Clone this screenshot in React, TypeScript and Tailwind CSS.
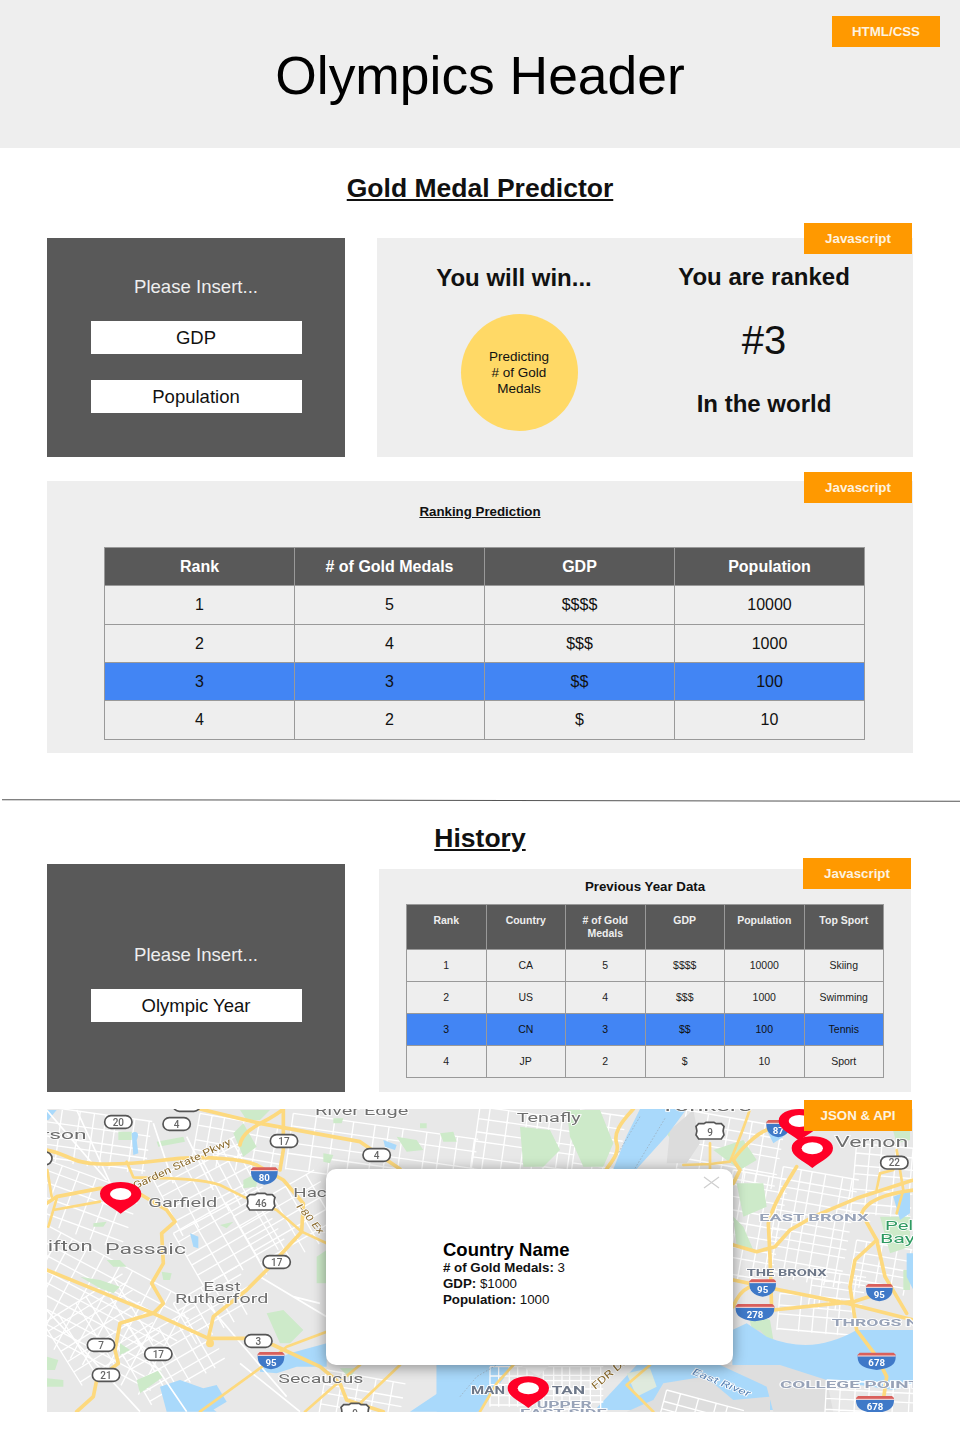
import React from "react";

const FONT = { fontFamily: '"Liberation Sans", Arial, sans-serif' };

function Badge({ label, className }: { label: string; className: string }) {
  return (
    <div className={"absolute flex h-[31px] w-[108px] items-center justify-center bg-[#ff9900] pt-[1px] text-[13.3px] font-bold text-[#fdf3e0] " + className}>
      {label}
    </div>
  );
}

function InsertField({ label }: { label: string }) {
  return <div className="flex h-[33px] w-[211px] items-center justify-center bg-white text-[18.5px] text-[#111]">{label}</div>;
}

const bigRows = [
  { h: "h-[39px]", c: ["1", "5", "$$$$", "10000"] },
  { h: "h-[38px]", c: ["2", "4", "$$$", "1000"] },
  { h: "h-[38px] bg-[#4285f4]", c: ["3", "3", "$$", "100"] },
  { h: "h-[39px]", c: ["4", "2", "$", "10"] },
];

const smallRows = [
  ["1", "CA", "5", "$$$$", "10000", "Skiing"],
  ["2", "US", "4", "$$$", "1000", "Swimming"],
  ["3", "CN", "3", "$$", "100", "Tennis"],
  ["4", "JP", "2", "$", "10", "Sport"],
];

function jitter(i: number) {
  const v = Math.sin(i * 12.9898 + 4.1) * 43758.5453;
  return 0.65 + 0.7 * (v - Math.floor(v));
}

function grid(x: number, y: number, w: number, h: number, angle: number, sx: number, sy: number) {
  let d = "";
  let n = Math.round(x + y);
  for (let i = 0; i <= w; i += sx * jitter(n++)) d += `M${Math.round(i)} 0V${h}`;
  for (let j = 0; j <= h; j += sy * jitter(n++)) d += `M0 ${Math.round(j)}H${w}`;
  return <path d={d} transform={`translate(${x} ${y}) rotate(${angle})`} fill="none" stroke="#fff" strokeWidth="4" />;
}

function L({ x, y, w, s = 40, c = "#6f6f6f", t, b, i, r }: { x: number; y: number; w: number; s?: number; c?: string; t: string; b?: boolean; i?: boolean; r?: number }) {
  return (
    <text
      x={x}
      y={y}
      fontSize={s}
      fill={c}
      textLength={w}
      lengthAdjust="spacingAndGlyphs"
      fontWeight={b ? 700 : 400}
      fontStyle={i ? "italic" : "normal"}
      fontFamily="Roboto, sans-serif"
      stroke="#fff"
      strokeWidth="4"
      paintOrder="stroke"
      transform={r ? `rotate(${r} ${x} ${y})` : undefined}
    >
      {t}
    </text>
  );
}

function Pill({ x, y, t }: { x: number; y: number; t: string }) {
  return (
    <g>
      <rect x={x - 41} y={y - 19} width="82" height="38" rx="19" fill="#fff" stroke="#555" strokeWidth="5" />
      <text x={x} y={y + 11} fontSize="30" fill="#666" fontWeight="500" textAnchor="middle" fontFamily="Roboto, sans-serif">{t}</text>
    </g>
  );
}

function UsShield({ x, y, t }: { x: number; y: number; t: string }) {
  return (
    <g>
      <path d={`M${x - 42} ${y - 16}l8-8h16l6-4h24l6 4h16l8 8c-4 10-4 16 0 26l-8 12h-68l-8-12c4-10 4-16 0-26z`} fill="#fff" stroke="#555" strokeWidth="5" />
      <text x={x} y={y + 12} fontSize="30" fill="#666" fontWeight="500" textAnchor="middle" fontFamily="Roboto, sans-serif">{t}</text>
    </g>
  );
}

function Interstate({ x, y, t, w = 40 }: { x: number; y: number; t: string; w?: number }) {
  return (
    <g>
      <path d={`M${x - w} ${y - 22}h${2 * w}c1 24-8 38-${w} 44c-${w - 8}-6-${w + 1}-20-${w}-44z`} fill="#3f79c8" />
      <path d={`M${x - w} ${y - 24}l6-6h${2 * w - 12}l6 6v5h-${2 * w}z`} fill="#d9605c" />
      <path d={`M${x - w} ${y - 20}h${2 * w}`} stroke="#fff" strokeWidth="2.5" />
      <text x={x} y={y + 11} fontSize="29" fill="#fff" fontWeight="700" textAnchor="middle" fontFamily="Roboto, sans-serif">{t}</text>
    </g>
  );
}

function Pin({ x, y }: { x: number; y: number }) {
  return (
    <g>
      <path d={`M${x} ${y + 57}C${x - 32} ${y + 32} ${x - 62} ${y + 22} ${x - 62} ${y - 3}C${x - 62} ${y - 25} ${x - 32} ${y - 38} ${x} ${y - 38}C${x + 32} ${y - 38} ${x + 62} ${y - 25} ${x + 62} ${y - 3}C${x + 62} ${y + 22} ${x + 32} ${y + 32} ${x} ${y + 57}z`} fill="#ff0027" />
      <ellipse cx={x} cy={y - 2} rx="32" ry="18" fill="#fff" />
    </g>
  );
}

function MapDrawing() {
  const y1 = { fill: "none", stroke: "#fdd97e", strokeWidth: 11, strokeLinejoin: "round" as const, strokeLinecap: "round" as const };
  const y2 = { ...y1, strokeWidth: 8 };
  const w = { fill: "none", stroke: "#fff", strokeWidth: 5 };
  return (
    <svg viewBox="47 1109 866 303" className="block h-[303px] w-[866px] blur-[0.5px]">
      <rect x="47" y="1109" width="866" height="303" fill="#e8e8e8" />
      <g transform="translate(0 1090) scale(0.33333)">
        {grid(140, 50, 320, 160, 8, 45, 34)}
        {grid(140, 210, 300, 180, 20, 50, 38)}
        {grid(130, 400, 520, 320, 28, 52, 38)}
        {grid(460, 270, 280, 190, -28, 46, 36)}
        {grid(520, 430, 280, 200, -30, 60, 42)}
        {grid(700, 380, 280, 200, -30, 64, 46)}
        {grid(600, 70, 270, 150, 10, 50, 38)}
        {grid(880, 70, 560, 170, 8, 60, 38)}
        {grid(130, 700, 280, 220, -32, 48, 38)}
        {grid(360, 780, 260, 190, -30, 46, 38)}
        {grid(520, 640, 220, 140, -30, 44, 36)}
        {grid(980, 840, 240, 130, 10, 44, 34)}
        <g fill="#cdeac9">
          <path d="M355 125h40v25h-40zM470 155l80-15 5 15-80 15zM700 130l30-30 40 70-40 30zM720 60h90l-30 30h-40zM970 190l30 5-10 25-20-5zM1000 85h30l-5 15h-25zM1190 140l60 10 20 30-50 5zM1260 100h20v15h-20zM1320 130l40-5 10 30-40 0zM280 400l40-5-10 15-30 0zM730 270l40-20 0 40-40 5zM660 405l40-10-20 20zM240 560l60 10 60 20-20 20-40-15zM320 510l40 0 20 20-40 0zM485 545l30 5-5 20-20 0zM800 670l50-10 60 60-40 40h-30zM850 720l40 0-30 40-10-10zM140 800l35 10-10 30-25 0zM140 865l50 5 0 20-50 0zM410 870l70-30 10 20-70 50zM360 760l30 20-30 15zM950 500l30-20v100h-30zM1020 835l50 0-20 30z" />
        </g>
        <g fill="#a9d9fb">
          <path d="M480 890l60-20 70 25 40-10 30 50-50 30H500zM560 965l30-40 60 40zM1230 965l120-80 90-40v120zM780 830l90-40 110-30v70h-90l-60 20-50-5z" />
          <path d="M395 130c15-10 25 0 15 20l5 40-15 5zM1150 150l40 15-5 15-30-10zM570 430l25 10 0 35-15-5z" />
          <path d="M140 60l30 0-25 30-5 0z" />
        </g>
        <path d={"M140 60L320 270M230 60L340 300M460 100L520 280M560 140L640 300M140 660L420 965M380 700L560 965M620 640L860 920M720 820L900 965M880 620L960 640M780 560L980 680"} {...w} />
        <path d="M140 180C200 190 220 222 300 222C400 225 480 210 540 205C620 200 720 205 770 225L850 270L910 340L905 425L800 540L740 600L640 680L625 745" {...y1} />
        <path d="M600 57L780 100L1080 155L1200 237" {...y1} />
        <path d="M850 57L850 180L840 240M850 57C800 100 730 110 720 165" {...y1} />
        <path d="M380 215L400 262C500 265 600 265 660 285L730 320L830 360L905 425L980 460" {...y2} />
        <path d="M140 340L170 320L300 295L400 300L500 360L525 395L485 430L490 520L455 580L490 640L460 670L360 700L345 780L355 820L290 870L280 920L230 965" {...y1} />
        <path d="M170 325L160 360L145 410M142 240L155 320M160 360L300 335" {...y2} />
        <path d="M140 540L460 670L625 745L740 745L820 765L960 830L1020 880L1040 930L1150 965" {...y1} />
        <path d="M600 965L800 820L860 770L980 725M915 965L1000 890L1080 825M1080 940L1200 825" {...y2} />
        <circle cx="630" cy="760" r="12" fill="#fdd97e" />
        <L x={125} y={148} w={135} s={40} t="rson" />
        <L x={945} y={76} w={280} s={38} t="River Edge" />
        <L x={445} y={350} w={207} s={38} t="Garfield" />
        <L x={880} y={322} w={100} s={40} t="Hac" />
        <L x={143} y={484} w={135} s={42} t="ifton" />
        <L x={315} y={492} w={243} s={44} t="Passaic" />
        <L x={610} y={603} w={112} s={36} t="East" />
        <L x={525} y={640} w={280} s={38} t="Rutherford" />
        <L x={835} y={880} w={255} s={36} t="Secaucus" />
        <L x={405} y={298} w={320} s={30} c="#8a6a2c" t="Garden State Pkwy" r={-25} />
        <L x={888} y={350} w={110} s={28} c="#8a6a2c" i t="I-80 Ex" r={50} />
        <Pill x={355} y={96} t="20" />
        <Pill x={530} y={102} t="4" />
        <Pill x={852} y={153} t="17" />
        <Pill x={1130} y={195} t="4" />
        <Pill x={830} y={516} t="17" />
        <Pill x={775} y={753} t="3" />
        <Pill x={303} y={765} t="7" />
        <Pill x={475} y={792} t="17" />
        <Pill x={318} y={855} t="21" />
        <Pill x={115} y={205} t="9" />
        <Pill x={560} y={45} t="4" />
        <UsShield x={783} y={338} t="46" />
        <UsShield x={1065} y={968} t="9" />
        <Interstate x={793} y={262} t="80" />
        <Interstate x={813} y={816} t="95" />
        <Pin x={362} y={314} />
      </g>
      <g transform="translate(480 1090) scale(0.33333)">
        {grid(0, 50, 300, 190, 8, 44, 36)}
        {grid(300, 60, 140, 180, 8, 50, 40)}
        {grid(620, 60, 300, 190, 10, 60, 42)}
        {grid(760, 240, 170, 330, 10, 46, 38)}
        {grid(910, 230, 230, 330, 10, 44, 34)}
        {grid(1130, 160, 180, 210, 5, 40, 36)}
        {grid(1000, 540, 160, 110, 8, 40, 30)}
        {grid(1130, 450, 170, 140, 10, 40, 30)}
        {grid(900, 610, 230, 110, 5, 50, 34)}
        <g fill="#cdeac9">
          <path d="M120 110l90 10 30 60-50 50-60 0zM260 60h100l40 100-30 70h-60l-40-90zM560 130l40-20 40 60-40 20zM700 180l90-30 40 60-50 30zM770 280l80 0 10 70-70 30zM760 380l30 30 30 70-50-10zM1000 60l60 0 0 40-60 10zM1230 90l60 0 0 60-40 10zM1200 380l90 0 0 90-60 20zM800 660l70 30 10 60-60-20zM1270 540l20 0 0 60-20 0z" />
        </g>
        <g fill="#dcdcdc">
          <path d="M570 120l70-60 20 100-40 60h-60zM760 720l80 0 50 60-60 10z" />
        </g>
        <g fill="#a9d9fb">
          <path d="M480 57h140l-60 80-90 100h-70l40-100zM860 120l30-10 20 30-30 20zM1240 320l50-20v70l-30 20zM1280 490l20 0v110l-20-40z" />
          <path d="M-130 965V825H757V720L800 700L860 740C960 780 1040 770 1130 720H1300V880L1240 900L1040 870L1000 960H-130z" />
        </g>
        <path d="M100 825H470L340 965H-10z" fill="#e8e8e8" />
        <path d="M550 880L670 860L700 880L760 930L870 920L870 965H440L520 930z" fill="#dedede" />
        <path d="M720 825H900L1040 870L1060 965H880L860 890z" fill="#dedede" />
        <path d="M440 850L510 835L530 890L470 920z" fill="#dfeadd" />
        <path d="M-130 825L100 825L0 965H-130z" fill="#a9d9fb" />
        {grid(30, 830, 130, 120, 0, 30, 26)}
        {grid(190, 830, 180, 135, 0, 26, 24)}
        {grid(560, 900, 240, 80, 15, 44, 28)}
        {grid(1040, 870, 270, 100, 3, 40, 28)}
        <path d="M-60 920L-10 860L50 825" fill="none" stroke="#9aa8b4" strokeWidth="2" strokeDasharray="5 5" />
        <path d="M480 80l-90 150M555 85l-90 150" fill="none" stroke="#9aa8b4" strokeWidth="2" strokeDasharray="5 5" />
        <path d="M460 57C420 100 400 130 410 160C420 190 390 220 380 237" {...y1} />
        <path d="M810 57C790 120 760 190 750 215L690 222L610 225M690 160L690 237" {...y2} />
        <path d="M860 120C830 130 780 180 760 210L780 240L760 280" {...y1} />
        <path d="M950 230C920 280 880 340 865 400L870 500L875 660" {...y1} />
        <path d="M760 465L830 485L885 470L930 420L1000 380L1130 325L1300 270" {...y1} />
        <path d="M1145 370C1160 330 1220 310 1300 300M1145 370L1190 450L1215 560L1280 670" {...y1} />
        <path d="M1190 450L1125 510L1110 590L1130 720L1190 800L1220 860L1210 930" {...y1} />
        <path d="M760 570L900 600L1100 640L1300 690M880 660L1120 635L1200 610M760 650C770 620 790 600 810 590" {...y1} />
        <path d="M1250 180L1270 300L1250 370M1190 300L1200 250L1240 240" {...y2} />
        <path d="M100 825L50 880L0 965M510 825L440 885L520 965" {...y2} />
        <path d="M120 825h90l-35 33z" fill="#f2f2f2" />
        <L x={110} y={95} w={192} s={38} t="Tenafly" />
        <L x={540} y={64} w={275} s={44} t="Yonkers" />
        <L x={1065} y={172} w={220} s={42} t="Vernon" />
        <L x={838} y={394} w={328} s={28} b c="#98a3b8" t="EAST BRONX" />
        <L x={1215} y={420} w={85} s={38} c="#2f9a62" t="Pel" />
        <L x={1200} y={460} w={105} s={38} c="#2f9a62" t="Bay" />
        <L x={800} y={558} w={240} s={28} b c="#6d7788" t="THE BRONX" />
        <L x={1055} y={708} w={260} s={28} b c="#98a3b8" t="THROGS N" />
        <L x={900} y={895} w={420} s={28} b c="#98a3b8" t="COLLEGE POINT" />
        <L x={-27} y={913} w={102} s={30} b c="#6d7788" t="MAN" />
        <L x={215} y={913} w={100} s={30} b c="#6d7788" t="TAN" />
        <L x={170} y={953} w={165} s={28} b c="#98a3b8" t="UPPER" />
        <L x={120} y={978} w={260} s={28} b c="#98a3b8" t="EAST SIDE" />
        <L x={345} y={900} w={125} s={30} c="#8a6a2c" t="FDR Dr" r={-40} />
        <L x={635} y={852} w={185} s={28} i c="#5b86b8" t="East River" r={22} />
        <UsShield x={690} y={125} t="9" />
        <Pill x={1243} y={218} t="22" />
        <Interstate x={895} y={120} t="87" w={36} />
        <Interstate x={848} y={598} t="95" />
        <Interstate x={825} y={672} t="278" w={58} />
        <Interstate x={1198} y={612} t="95" />
        <Interstate x={1190} y={818} t="678" w={57} />
        <Interstate x={1185} y={948} t="678" w={57} />
        <Pin x={958} y={95} />
        <Pin x={997} y={177} />
        <Pin x={145} y={897} />
      </g>
    </svg>
  );
}

export default function App() {
  return (
    <div className="h-[1440px] w-[960px] overflow-hidden bg-white" style={FONT}>
      <header className="relative flex h-[148px] items-center justify-center bg-[#eeeeee] pt-[3px]">
        <h1 className="text-[53.4px] leading-none text-black">Olympics Header</h1>
        <Badge label="HTML/CSS" className="right-[20px] top-[16px]" />
      </header>

      <h2 className="mt-[24px] h-[32px] text-center text-[26.5px] font-bold leading-[32px] text-[#111] underline">Gold Medal Predictor</h2>

      <section className="mx-[47px] mt-[34px] flex gap-[32px]">
        <div className="flex h-[219px] w-[298px] flex-col items-center bg-[#595959] pt-[38px]">
          <p className="mb-[23px] text-[18.6px] leading-[22px] text-[#eeeeee]">Please Insert...</p>
          <InsertField label="GDP" />
          <div className="h-[26px]" />
          <InsertField label="Population" />
        </div>
        <div className="relative flex h-[219px] flex-1 bg-[#eeeeee]">
          <Badge label="Javascript" className="right-[1px] top-[-15px]" />
          <div className="flex w-[274px] flex-col items-center pt-[26px]">
            <p className="text-[24px] font-bold leading-[28px] text-[#111]">You will win...</p>
            <div className="ml-[10px] mt-[22px] flex h-[117px] w-[117px] items-center justify-center rounded-full bg-[#ffd966] text-center text-[13.5px] leading-[16px] text-[#111]">
              Predicting
              <br />
              # of Gold
              <br />
              Medals
            </div>
          </div>
          <div className="flex w-[226px] flex-col items-center pt-[25px]">
            <p className="whitespace-nowrap text-[24px] font-bold leading-[28px] text-[#111]">You are ranked</p>
            <p className="mt-[26px] text-[40px] leading-[46px] text-[#111]">#3</p>
            <p className="mt-[27px] whitespace-nowrap text-[24px] font-bold leading-[28px] text-[#111]">In the world</p>
          </div>
        </div>
      </section>

      <section className="relative mx-[47px] mt-[24px] h-[272px] bg-[#eeeeee] pt-[23px]">
        <Badge label="Javascript" className="right-[1px] top-[-9px]" />
        <h3 className="text-center text-[13.3px] font-bold leading-[16px] text-[#111] underline">Ranking Prediction</h3>
        <table className="ml-[57px] mt-[27px] w-[761px] table-fixed border-collapse text-center text-[16px] text-[#111]">
          <thead>
            <tr className="h-[38px] bg-[#595959] text-white">
              {["Rank", "# of Gold Medals", "GDP", "Population"].map((h) => (
                <th key={h} className="border border-[#999] p-0 font-bold">{h}</th>
              ))}
            </tr>
          </thead>
          <tbody>
            {bigRows.map((r) => (
              <tr key={r.c[0]} className={r.h}>
                {r.c.map((c, i) => (
                  <td key={i} className="border border-[#999] p-0">{c}</td>
                ))}
              </tr>
            ))}
          </tbody>
        </table>
      </section>

      <div className="ml-[2px] mt-[47px] h-px rotate-[0.1deg] bg-[#555]" />

      <h2 className="mt-[21px] h-[32px] text-center text-[26.5px] font-bold leading-[32px] text-[#111] underline">History</h2>

      <section className="mx-[47px] mt-[10px] flex gap-[34px]">
        <div className="flex h-[228px] w-[298px] flex-col items-center bg-[#595959] pt-[80px]">
          <p className="mb-[23px] text-[18.6px] leading-[22px] text-[#eeeeee]">Please Insert...</p>
          <InsertField label="Olympic Year" />
        </div>
        <div className="relative mt-[5px] h-[223px] w-[532px] bg-[#eeeeee] pt-[10px]">
          <Badge label="Javascript" className="right-0 top-[-11px]" />
          <h3 className="text-center text-[13.3px] font-bold leading-[16px] text-[#111]">Previous Year Data</h3>
          <table className="ml-[27px] mt-[9px] w-[478px] table-fixed border-collapse text-center text-[10.5px] text-[#222]">
            <thead>
              <tr className="h-[45px] bg-[#595959] align-top text-[#eeeeee]">
                {["Rank", "Country", "# of Gold Medals", "GDP", "Population", "Top Sport"].map((h) => (
                  <th key={h} className="border border-[#999] px-[8px] pb-0 pt-[9px] text-[10.5px] font-bold leading-[13px]">
                    {h === "# of Gold Medals" ? (
                      <>
                        # of Gold
                        <br />
                        Medals
                      </>
                    ) : (
                      h
                    )}
                  </th>
                ))}
              </tr>
            </thead>
            <tbody>
              {smallRows.map((r) => (
                <tr key={r[0]} className={"h-[32px] " + (r[0] === "3" ? "bg-[#4285f4] text-[#111]" : "")}>
                  {r.map((c, i) => (
                    <td key={i} className="border border-[#999] p-0">{c}</td>
                  ))}
                </tr>
              ))}
            </tbody>
          </table>
        </div>
      </section>

      <section className="relative mx-[47px] mt-[17px] h-[303px]">
        <div className="h-[303px] overflow-hidden">
          <MapDrawing />
        </div>
        <Badge label="JSON & API" className="right-[1px] top-[-9px]" />
        <div className="absolute left-[279px] top-[60px] flex h-[196px] w-[407px] items-center rounded-[10px] bg-white pl-[117px] pt-[12px] shadow-[0_2px_14px_rgba(0,0,0,0.4)]">
          <div className="text-[13.3px] leading-[16px] text-[#111]">
            <p className="text-[18.5px] font-bold leading-[21px] text-black">Country Name</p>
            <p><b># of Gold Medals:</b> 3</p>
            <p><b>GDP:</b> $1000</p>
            <p><b>Population:</b> 1000</p>
          </div>
          <svg className="absolute right-[13px] top-[7px]" width="17" height="13" viewBox="0 0 17 13" fill="none" stroke="#cfcfcf" strokeWidth="1.3">
            <path d="M1 1l15 11M16 1L1 12" />
          </svg>
        </div>
      </section>
    </div>
  );
}
